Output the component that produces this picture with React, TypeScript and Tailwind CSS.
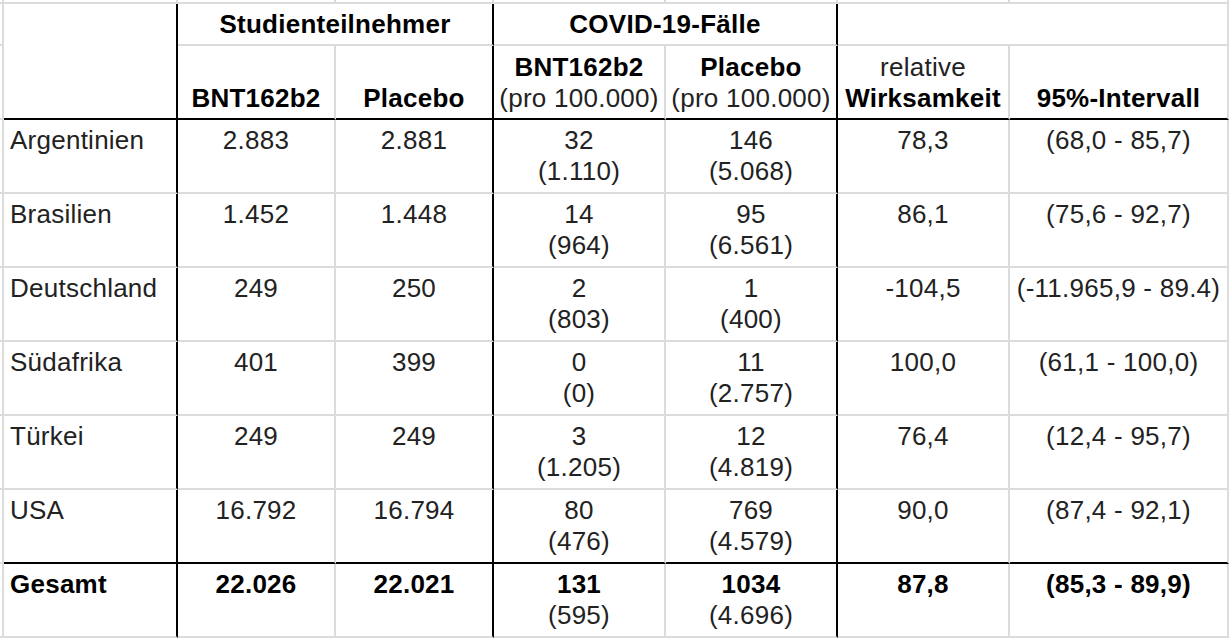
import React from 'react';

type Row = {
  name: string;
  vax: string;
  plc: string;
  casesVax: [string, string];
  casesPlc: [string, string];
  eff: string;
  ci: string;
};

const rows: Row[] = [
  { name: 'Argentinien', vax: '2.883', plc: '2.881', casesVax: ['32', '(1.110)'], casesPlc: ['146', '(5.068)'], eff: '78,3', ci: '(68,0 - 85,7)' },
  { name: 'Brasilien', vax: '1.452', plc: '1.448', casesVax: ['14', '(964)'], casesPlc: ['95', '(6.561)'], eff: '86,1', ci: '(75,6 - 92,7)' },
  { name: 'Deutschland', vax: '249', plc: '250', casesVax: ['2', '(803)'], casesPlc: ['1', '(400)'], eff: '-104,5', ci: '(-11.965,9 - 89.4)' },
  { name: 'Südafrika', vax: '401', plc: '399', casesVax: ['0', '(0)'], casesPlc: ['11', '(2.757)'], eff: '100,0', ci: '(61,1 - 100,0)' },
  { name: 'Türkei', vax: '249', plc: '249', casesVax: ['3', '(1.205)'], casesPlc: ['12', '(4.819)'], eff: '76,4', ci: '(12,4 - 95,7)' },
  { name: 'USA', vax: '16.792', plc: '16.794', casesVax: ['80', '(476)'], casesPlc: ['769', '(4.579)'], eff: '90,0', ci: '(87,4 - 92,1)' },
];

const total: Row = {
  name: 'Gesamt',
  vax: '22.026',
  plc: '22.021',
  casesVax: ['131', '(595)'],
  casesPlc: ['1034', '(4.696)'],
  eff: '87,8',
  ci: '(85,3 - 89,9)',
};

// gridline colour of the sheet
const gray = 'border-[#dcdcdc]';

const Strip = () => <div className={`border-r-2 border-b-2 ${gray}`} />;

const DataRow = ({ row, last, bold }: { row: Row; last?: boolean; bold?: boolean }) => {
  const b = last ? 'border-b-black' : 'border-b-[#dcdcdc]';
  const w = bold ? 'font-bold text-black' : '';
  const cell = `border-b-2 border-r-2 ${b} pt-[5px] text-center`;
  return (
    <>
      <Strip />
      <div className={`border-b-2 border-r-2 ${b} border-r-black pt-[5px] pl-[6px] ${w}`}>{row.name}</div>
      <div className={`${cell} border-r-[#dcdcdc] ${w}`}>{row.vax}</div>
      <div className={`${cell} border-r-black ${w}`}>{row.plc}</div>
      <div className={`${cell} border-r-[#dcdcdc]`}>
        <div className={w}>{row.casesVax[0]}</div>
        <div>{row.casesVax[1]}</div>
      </div>
      <div className={`${cell} border-r-black`}>
        <div className={w}>{row.casesPlc[0]}</div>
        <div>{row.casesPlc[1]}</div>
      </div>
      <div className={`${cell} border-r-[#dcdcdc] ${w}`}>{row.eff}</div>
      <div className={`${cell} border-r-[#dcdcdc] ${w}`}>{row.ci}</div>
    </>
  );
};

export default function App() {
  return (
    <div className="w-[1229px] h-[640px] bg-white overflow-hidden font-['Liberation_Sans',Arial,sans-serif] text-[26px] leading-[31px] tracking-[0.25px] text-[#222]">
      <div className="grid grid-cols-[4px_174px_158px_158px_172px_172px_172px_219px] grid-rows-[4px_42px_74px_repeat(7,74px)]">
        {/* top strip */}
        {Array.from({ length: 8 }).map((_, i) => (
          <Strip key={i} />
        ))}

        {/* header row 1 */}
        <Strip />
        <div className="row-span-2 border-r-2 border-b-2 border-r-black border-b-black" />
        <div className="col-span-2 flex items-center justify-center border-r-2 border-b-2 border-r-black border-b-[#dcdcdc] font-bold text-black leading-[40px]">
          Studienteilnehmer
        </div>
        <div className="col-span-2 flex items-center justify-center border-r-2 border-b-2 border-r-black border-b-[#dcdcdc] font-bold text-black leading-[40px]">
          COVID-19-Fälle
        </div>
        <div className={`col-span-2 border-r-2 border-b-2 ${gray}`} />

        {/* header row 2 */}
        <Strip />
        <div className="flex flex-col justify-end items-center pb-[4px] border-r-2 border-b-2 border-r-[#dcdcdc] border-b-black font-bold text-black">
          BNT162b2
        </div>
        <div className="flex flex-col justify-end items-center pb-[4px] border-r-2 border-b-2 border-r-black border-b-black font-bold text-black">
          Placebo
        </div>
        <div className="flex flex-col justify-end items-center pb-[4px] border-r-2 border-b-2 border-r-[#dcdcdc] border-b-black">
          <span className="font-bold text-black">BNT162b2</span>
          <span>(pro 100.000)</span>
        </div>
        <div className="flex flex-col justify-end items-center pb-[4px] border-r-2 border-b-2 border-r-black border-b-black">
          <span className="font-bold text-black">Placebo</span>
          <span>(pro 100.000)</span>
        </div>
        <div className="flex flex-col justify-end items-center pb-[4px] border-r-2 border-b-2 border-r-[#dcdcdc] border-b-black">
          <span>relative</span>
          <span className="font-bold text-black">Wirksamkeit</span>
        </div>
        <div className="flex flex-col justify-end items-center pb-[4px] border-r-2 border-b-2 border-r-[#dcdcdc] border-b-black font-bold text-black">
          95%-Intervall
        </div>

        {rows.map((r, i) => (
          <DataRow key={r.name} row={r} last={i === rows.length - 1} />
        ))}
        <DataRow row={total} bold />
      </div>
    </div>
  );
}
